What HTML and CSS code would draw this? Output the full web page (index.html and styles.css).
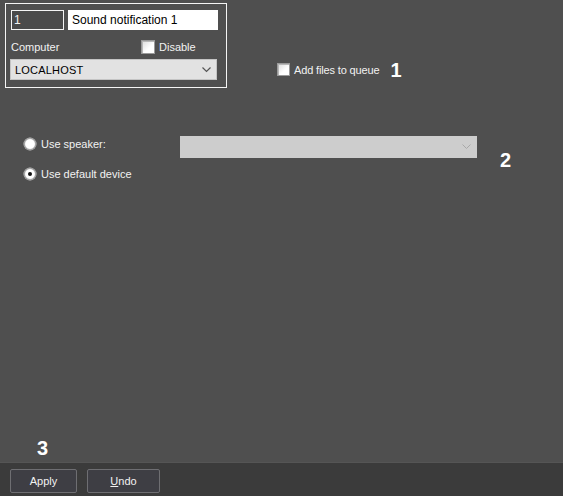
FILE: index.html
```html
<!DOCTYPE html>
<html>
<head>
<meta charset="utf-8">
<link rel="stylesheet" href="styles.css">
</head>
<body>
<div class="page">
  <div class="top">
    <div class="group">
      <div class="row-ids">
        <div class="id-box">1</div>
        <div class="name-box">Sound notification 1</div>
      </div>
      <div class="row-comp">
        <span class="lbl">Computer</span>
        <label class="chk disable"><span class="box"></span><span>Disable</span></label>
      </div>
      <div class="select comp-select">
        <span>LOCALHOST</span>
        <svg class="arrow" width="9" height="6" viewBox="0 0 9 6"><path d="M0.5 0.5 L4.5 4.5 L8.5 0.5" fill="none" stroke="#555" stroke-width="1.2"/></svg>
      </div>
    </div>
    <label class="chk queue"><span class="box"></span><span>Add files to queue</span></label>
    <span class="num num1">1</span>
  </div>

  <div class="device">
    <div class="dev-row first">
      <label class="radio top-radio"><span class="dot"></span><span>Use speaker:</span></label>
      <div class="select speaker-select">
        <svg class="arrow" width="9" height="6" viewBox="0 0 9 6"><path d="M0.5 0.5 L4.5 4.5 L8.5 0.5" fill="none" stroke="#a8a8a8" stroke-width="1"/></svg>
      </div>
      <span class="num num2">2</span>
    </div>
    <div class="dev-row second">
      <label class="radio checked"><span class="dot"></span><span>Use default device</span></label>
    </div>
  </div>

  <div class="fill"></div>
  <span class="num num3">3</span>

  <div class="bar">
    <button class="btn apply">Apply</button>
    <button class="btn undo"><u>U</u>ndo</button>
  </div>
</div>
</body>
</html>
```

FILE: styles.css
```css
html, body {
  margin: 0;
  padding: 0;
}
body {
  width: 563px;
  height: 496px;
  background: #4f4f4f;
  font-family: "Liberation Sans", Arial, sans-serif;
  font-size: 11px;
  color: #f2f2f2;
  overflow: hidden;
}
.page {
  height: 496px;
  display: flex;
  flex-direction: column;
}
.top {
  display: flex;
  align-items: flex-start;
  padding: 3px 0 0 5px;
}
.group {
  width: 220px;
  height: 83px;
  border: 1px solid #f4f4f4;
  padding: 0;
  display: flex;
  flex-direction: column;
}
.row-ids {
  display: flex;
  margin: 6px 0 0 5px;
  gap: 4px;
}
.id-box {
  height: 18px;
  border: 1px solid #f4f4f4;
  background: #4a4a4a;
  line-height: 18px;
  padding-left: 2px;
  font-size: 12px;
  width: 49px;
}
.name-box {
  width: 146px;
  height: 20px;
  background: #ffffff;
  color: #000;
  line-height: 20px;
  padding-left: 4px;
  font-size: 12px;
}
.row-comp {
  display: flex;
  align-items: center;
  margin: 10px 0 0 5px;
  height: 14px;
}
.lbl {
  width: 130px;
}
.chk {
  display: flex;
  align-items: center;
  gap: 4px;
}
.box {
  width: 11px;
  height: 11px;
  border: 1px solid #9a9a9a;
  background: linear-gradient(135deg, #dcdcdc 0%, #ffffff 60%);
  box-shadow: inset 1px 1px 0 #b8b8b8;
}
.disable .box {
  width: 12px;
  height: 12px;
}
.comp-select {
  margin: 5px 0 0 4px;
  width: 207px;
  height: 21px;
}
.select {
  box-sizing: border-box;
  display: flex;
  align-items: center;
  justify-content: space-between;
  background: #e2e2e2;
  border: 1px solid #c4c4c4;
  color: #000;
  padding: 0 5px 0 4px;
  font-size: 11px;
}
.comp-select span {
  letter-spacing: 0.2px;
}
.speaker-select {
  background: #cdcdcd;
  border-color: #cdcdcd;
  justify-content: flex-end;
  width: 297px;
  height: 22px;
}
.queue {
  margin: 60px 0 0 50px;
  letter-spacing: -0.15px;
}
.num {
  font-weight: bold;
  font-size: 20px;
  line-height: 20px;
  color: #ffffff;
}
.num1 {
  margin: 57px 0 0 11px;
}
.device {
  margin-top: 48px;
  padding-left: 24px;
}
.dev-row {
  display: flex;
  align-items: flex-start;
}
.dev-row.first {
  height: 22px;
}
.dev-row .radio {
  width: 156px;
}
.top-radio {
  margin-top: 2px;
}
.dev-row.second {
  margin-top: 10px;
}
.radio {
  display: flex;
  align-items: center;
  gap: 5px;
}
.dot {
  width: 10px;
  height: 10px;
  border-radius: 50%;
  border: 1px solid #b0b0b0;
  background: radial-gradient(circle, #ffffff 55%, #e4e4e4 100%);
  box-shadow: 0 0 0 0.5px #cfcfcf;
  position: relative;
  flex: none;
}
.radio.checked .dot::after {
  content: "";
  position: absolute;
  left: 3px;
  top: 3px;
  width: 4px;
  height: 4px;
  border-radius: 50%;
  background: #111;
}
.num2 {
  margin: 14px 0 0 23px;
}
.fill {
  flex: 1;
}
.num3 {
  margin: 0 0 4px 37px;
}
.bar {
  height: 34px;
  box-sizing: border-box;
  background: #3b3b3b;
  border-top: 1px solid #555;
  display: flex;
  align-items: flex-start;
  gap: 10px;
  padding: 6px 0 0 10px;
}
.btn {
  font-family: "Liberation Sans", Arial, sans-serif;
  font-size: 11px;
  color: #f2f2f2;
  background: #3e3e44;
  border: 1px solid #6e6e72;
  border-radius: 2px;
  height: 24px;
  padding: 0;
  margin: 0;
}
.apply {
  width: 67px;
}
.undo {
  width: 73px;
}
```
